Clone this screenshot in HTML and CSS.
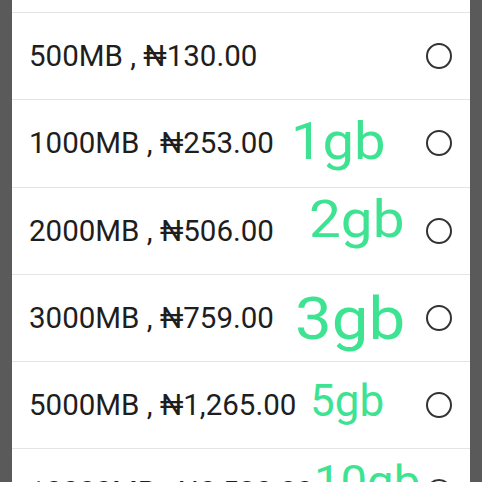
FILE: index.html
```html
<!DOCTYPE html>
<html>
<head>
<meta charset="utf-8">
<link rel="stylesheet" href="styles.css">
</head>
<body>
<div class="card">
  <div class="row-top"></div>
  <div class="row">
    <span class="label">500MB , ₦130.00</span>
    <span class="radio"></span>
  </div>
  <div class="row">
    <span class="label">1000MB , ₦253.00</span>
    <span class="note note-1">1gb</span>
    <span class="radio"></span>
  </div>
  <div class="row">
    <span class="label">2000MB , ₦506.00</span>
    <span class="note note-2">2gb</span>
    <span class="radio"></span>
  </div>
  <div class="row">
    <span class="label">3000MB , ₦759.00</span>
    <span class="note note-3">3gb</span>
    <span class="radio"></span>
  </div>
  <div class="row">
    <span class="label">5000MB , ₦1,265.00</span>
    <span class="note note-5">5gb</span>
    <span class="radio"></span>
  </div>
  <div class="row">
    <span class="label">10000MB , ₦2,530.00</span>
    <span class="note note-10">10gb</span>
    <span class="radio"></span>
  </div>
</div>
</body>
</html>
```
FILE: styles.css
```css
html, body {
  margin: 0;
  padding: 0;
  background: #5a5a5a;
  height: 482px;
  overflow: hidden;
}
.card {
  margin: 0 12px;
  background: #ffffff;
  font-family: Roboto, "Liberation Sans", sans-serif;
}
.row-top {
  height: 12px;
}
.row {
  position: relative;
  height: 86.25px;
  border-top: 1px solid #e4e4e4;
  display: flex;
  align-items: center;
  padding: 0 18px 0 17px;
}
.label {
  flex: 1;
  font-size: 29.5px;
  color: #1e1e1e;
  white-space: nowrap;
}
.radio {
  width: 26px;
  height: 26px;
  box-sizing: border-box;
  border: 2px solid #333333;
  border-radius: 50%;
  flex: none;
}
.note {
  position: absolute;
  color: #3ee392;
  line-height: 1;
  white-space: nowrap;
  transform-origin: left center;
}
.note-1 { left: 279px; top: 16px; font-size: 52px; transform: scaleX(1.08); }
.note-2 { left: 297px; top: 6px; font-size: 52px; transform: scaleX(1.09); }
.note-3 { left: 283px; top: 14px; font-size: 60px; transform: scaleX(1.09); }
.note-5 { left: 298px; top: 17px; font-size: 44px; }
.note-10 { left: 302px; top: 10px; font-size: 45px; transform: scaleX(1.05); }
```
